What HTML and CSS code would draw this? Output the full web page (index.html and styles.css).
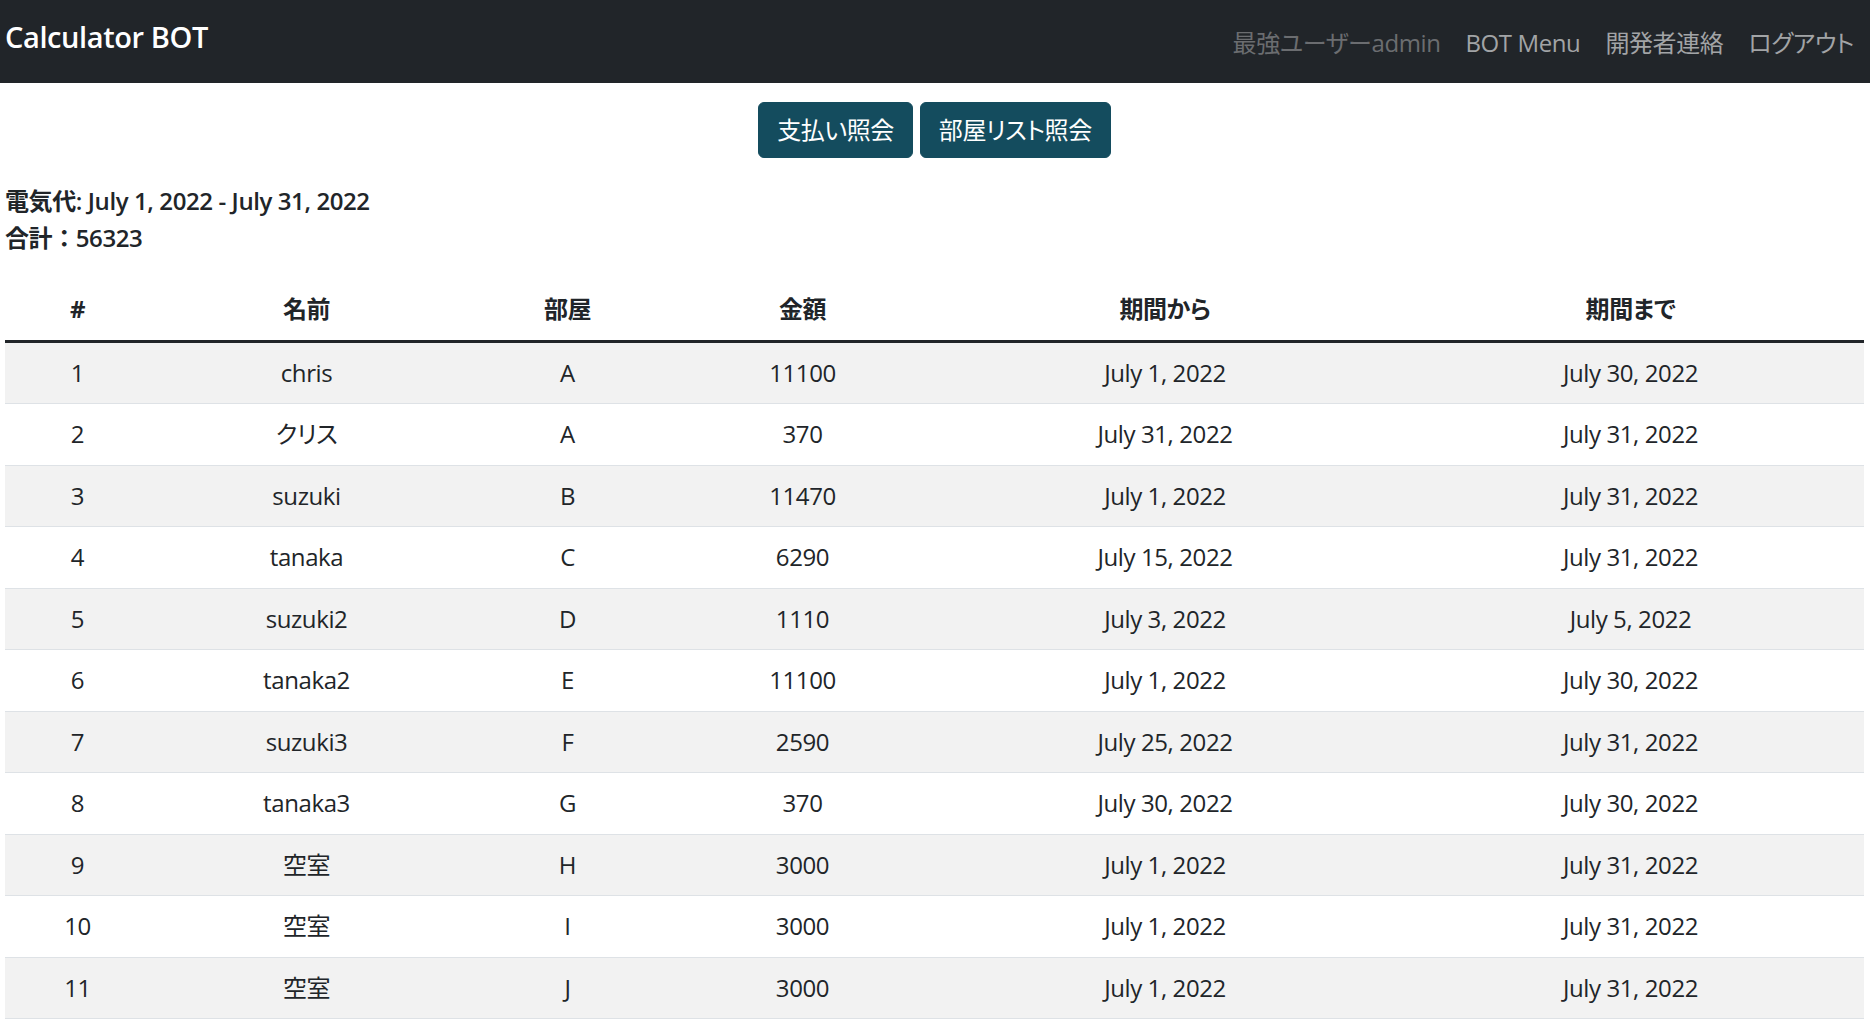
FILE: index.html
```html
<!DOCTYPE html>
<html lang="ja">
<head>
<meta charset="utf-8">
<title>Calculator BOT</title>
<link rel="stylesheet" href="styles.css">
</head>
<body>
<nav class="navbar">
  <a class="brand" href="#">Calculator BOT</a>
  <ul class="nav">
    <li><a class="nav-link disabled" href="#">最強ユーザーadmin</a></li>
    <li><a class="nav-link" href="#">BOT Menu</a></li>
    <li><a class="nav-link" href="#">開発者連絡</a></li>
    <li><a class="nav-link" href="#">ログアウト</a></li>
  </ul>
</nav>
<main class="content">
  <div class="actions">
    <a class="btn" href="#">支払い照会</a>
    <a class="btn" href="#">部屋リスト照会</a>
  </div>
  <div class="summary">
    <p>電気代: July 1, 2022 - July 31, 2022</p>
    <p>合計：56323</p>
  </div>
  <table class="table">
    <thead>
      <tr>
        <th class="c1">#</th>
        <th class="c2">名前</th>
        <th class="c3">部屋</th>
        <th class="c4">金額</th>
        <th class="c5">期間から</th>
        <th class="c6">期間まで</th>
      </tr>
    </thead>
    <tbody>
      <tr><td>1</td><td>chris</td><td>A</td><td>11100</td><td>July 1, 2022</td><td>July 30, 2022</td></tr>
      <tr><td>2</td><td>クリス</td><td>A</td><td>370</td><td>July 31, 2022</td><td>July 31, 2022</td></tr>
      <tr><td>3</td><td>suzuki</td><td>B</td><td>11470</td><td>July 1, 2022</td><td>July 31, 2022</td></tr>
      <tr><td>4</td><td>tanaka</td><td>C</td><td>6290</td><td>July 15, 2022</td><td>July 31, 2022</td></tr>
      <tr><td>5</td><td>suzuki2</td><td>D</td><td>1110</td><td>July 3, 2022</td><td>July 5, 2022</td></tr>
      <tr><td>6</td><td>tanaka2</td><td>E</td><td>11100</td><td>July 1, 2022</td><td>July 30, 2022</td></tr>
      <tr><td>7</td><td>suzuki3</td><td>F</td><td>2590</td><td>July 25, 2022</td><td>July 31, 2022</td></tr>
      <tr><td>8</td><td>tanaka3</td><td>G</td><td>370</td><td>July 30, 2022</td><td>July 30, 2022</td></tr>
      <tr><td>9</td><td>空室</td><td>H</td><td>3000</td><td>July 1, 2022</td><td>July 31, 2022</td></tr>
      <tr><td>10</td><td>空室</td><td>I</td><td>3000</td><td>July 1, 2022</td><td>July 31, 2022</td></tr>
      <tr><td>11</td><td>空室</td><td>J</td><td>3000</td><td>July 1, 2022</td><td>July 31, 2022</td></tr>
    </tbody>
  </table>
</main>
</body>
</html>
```

FILE: styles.css
```css
* { box-sizing: border-box; }
html, body { margin: 0; padding: 0; }
body {
  font-family: "Open Sans", "Noto Sans CJK JP", sans-serif;
  font-size: 24px;
  line-height: 1.5;
  letter-spacing: -0.4px;
  font-feature-settings: "palt";
  color: #212529;
  background: #fff;
}
a { text-decoration: none; }

.navbar {
  height: 83px;
  background: #212529;
  display: flex;
  align-items: center;
  justify-content: space-between;
  padding: 0 16px 0 5px;
}
.brand {
  color: #fff;
  font-size: 29px;
  font-weight: 600;
  line-height: 1;
  margin-top: -10px;
}
.nav {
  list-style: none;
  display: flex;
  gap: 25px;
  margin: 0;
  padding: 0;
  margin-top: 2px;
}
.nav-link { color: #a2a4a6; }
.nav-link.disabled { color: #6b6d70; }

.content { padding: 0 6px 0 5px; }

.actions {
  display: flex;
  justify-content: center;
  gap: 7px;
  margin-top: 19px;
}
.btn {
  display: inline-block;
  background: #144c5e;
  color: #fff;
  border: 1px solid #144c5e;
  border-radius: 6px;
  padding: 9px 18px;
  line-height: 36px;
  height: 56px;
}

.summary { margin-top: 25px; }
.summary p {
  margin: 0;
  font-weight: 600;
  line-height: 36.5px;
  font-feature-settings: normal;
}

.table {
  margin-top: 23px;
  width: 1859px;
  border-collapse: collapse;
  table-layout: fixed;
}
.table th, .table td {
  text-align: center;
  padding: 12px 6px;
  line-height: 36.5px;
  font-weight: 400;
}
.table th {
  font-weight: 700;
  border-bottom: 3px solid #212529;
}
.table td { border-bottom: 1px solid #dee2e6; }
.table tbody tr:nth-child(odd) td { background: #f2f2f2; }

.c1 { width: 145px; }
.c2 { width: 313px; }
.c3 { width: 209px; }
.c4 { width: 261px; }
.c5 { width: 464px; }
.c6 { width: 467px; }
```
